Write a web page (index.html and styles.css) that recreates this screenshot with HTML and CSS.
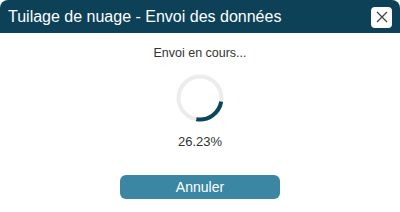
FILE: index.html
```html
<!DOCTYPE html>
<html lang="fr">
<head>
<meta charset="utf-8">
<title>Tuilage de nuage - Envoi des données</title>
<link rel="stylesheet" href="styles.css">
</head>
<body>
<div class="dialog">
  <div class="dialog-header">
    <span class="dialog-title">Tuilage de nuage - Envoi des données</span>
    <button class="close-btn" aria-label="Fermer">
      <svg width="12" height="12" viewBox="0 0 12 12"><path d="M1 1L11 11M11 1L1 11" stroke="#444" stroke-width="1.3" fill="none"/></svg>
    </button>
  </div>
  <div class="dialog-body">
    <div class="status">Envoi en cours...</div>
    <svg class="spinner" width="48" height="48" viewBox="0 0 48 48">
      <circle cx="24" cy="24" r="21.5" stroke="#ececec" stroke-width="4" fill="none"/>
      <path d="M45.2 27.7 A21.5 21.5 0 0 1 20.3 45.2" stroke="#0b465c" stroke-width="4" fill="none"/>
    </svg>
    <div class="percent">26.23%</div>
    <button class="cancel-btn">Annuler</button>
  </div>
</div>
</body>
</html>
```
FILE: styles.css
```css
html, body {
  margin: 0;
  padding: 0;
  background: #ffffff;
}
body {
  font-family: "Liberation Sans", Arial, sans-serif;
}
.dialog {
  width: 400px;
  height: 212px;
  box-sizing: border-box;
  border-radius: 8px;
  overflow: hidden;
  background: #ffffff;
  display: flex;
  flex-direction: column;
}
.dialog-header {
  height: 33px;
  flex: none;
  background: #0c4158;
  display: flex;
  align-items: center;
  justify-content: space-between;
  padding: 0 8px 0 8px;
}
.dialog-title {
  color: #ffffff;
  font-size: 16px;
}
.close-btn {
  width: 21px;
  height: 21px;
  border: none;
  border-radius: 4px;
  background: #ffffff;
  padding: 0;
  display: flex;
  align-items: center;
  justify-content: center;
  margin-top: 1px;
}
.dialog-body {
  display: flex;
  flex-direction: column;
  align-items: center;
  padding-top: 13px;
}
.status {
  font-size: 12.5px;
  color: #333333;
  line-height: 15px;
}
.spinner {
  margin-top: 13px;
  display: block;
}
.percent {
  font-size: 13px;
  color: #333333;
  line-height: 15px;
  margin-top: 12px;
}
.cancel-btn {
  margin-top: 26px;
  width: 160px;
  height: 24px;
  border: none;
  border-radius: 6px;
  background: #3a86a3;
  color: #ffffff;
  font-family: "Liberation Sans", Arial, sans-serif;
  font-size: 14px;
  padding: 0;
}
```
